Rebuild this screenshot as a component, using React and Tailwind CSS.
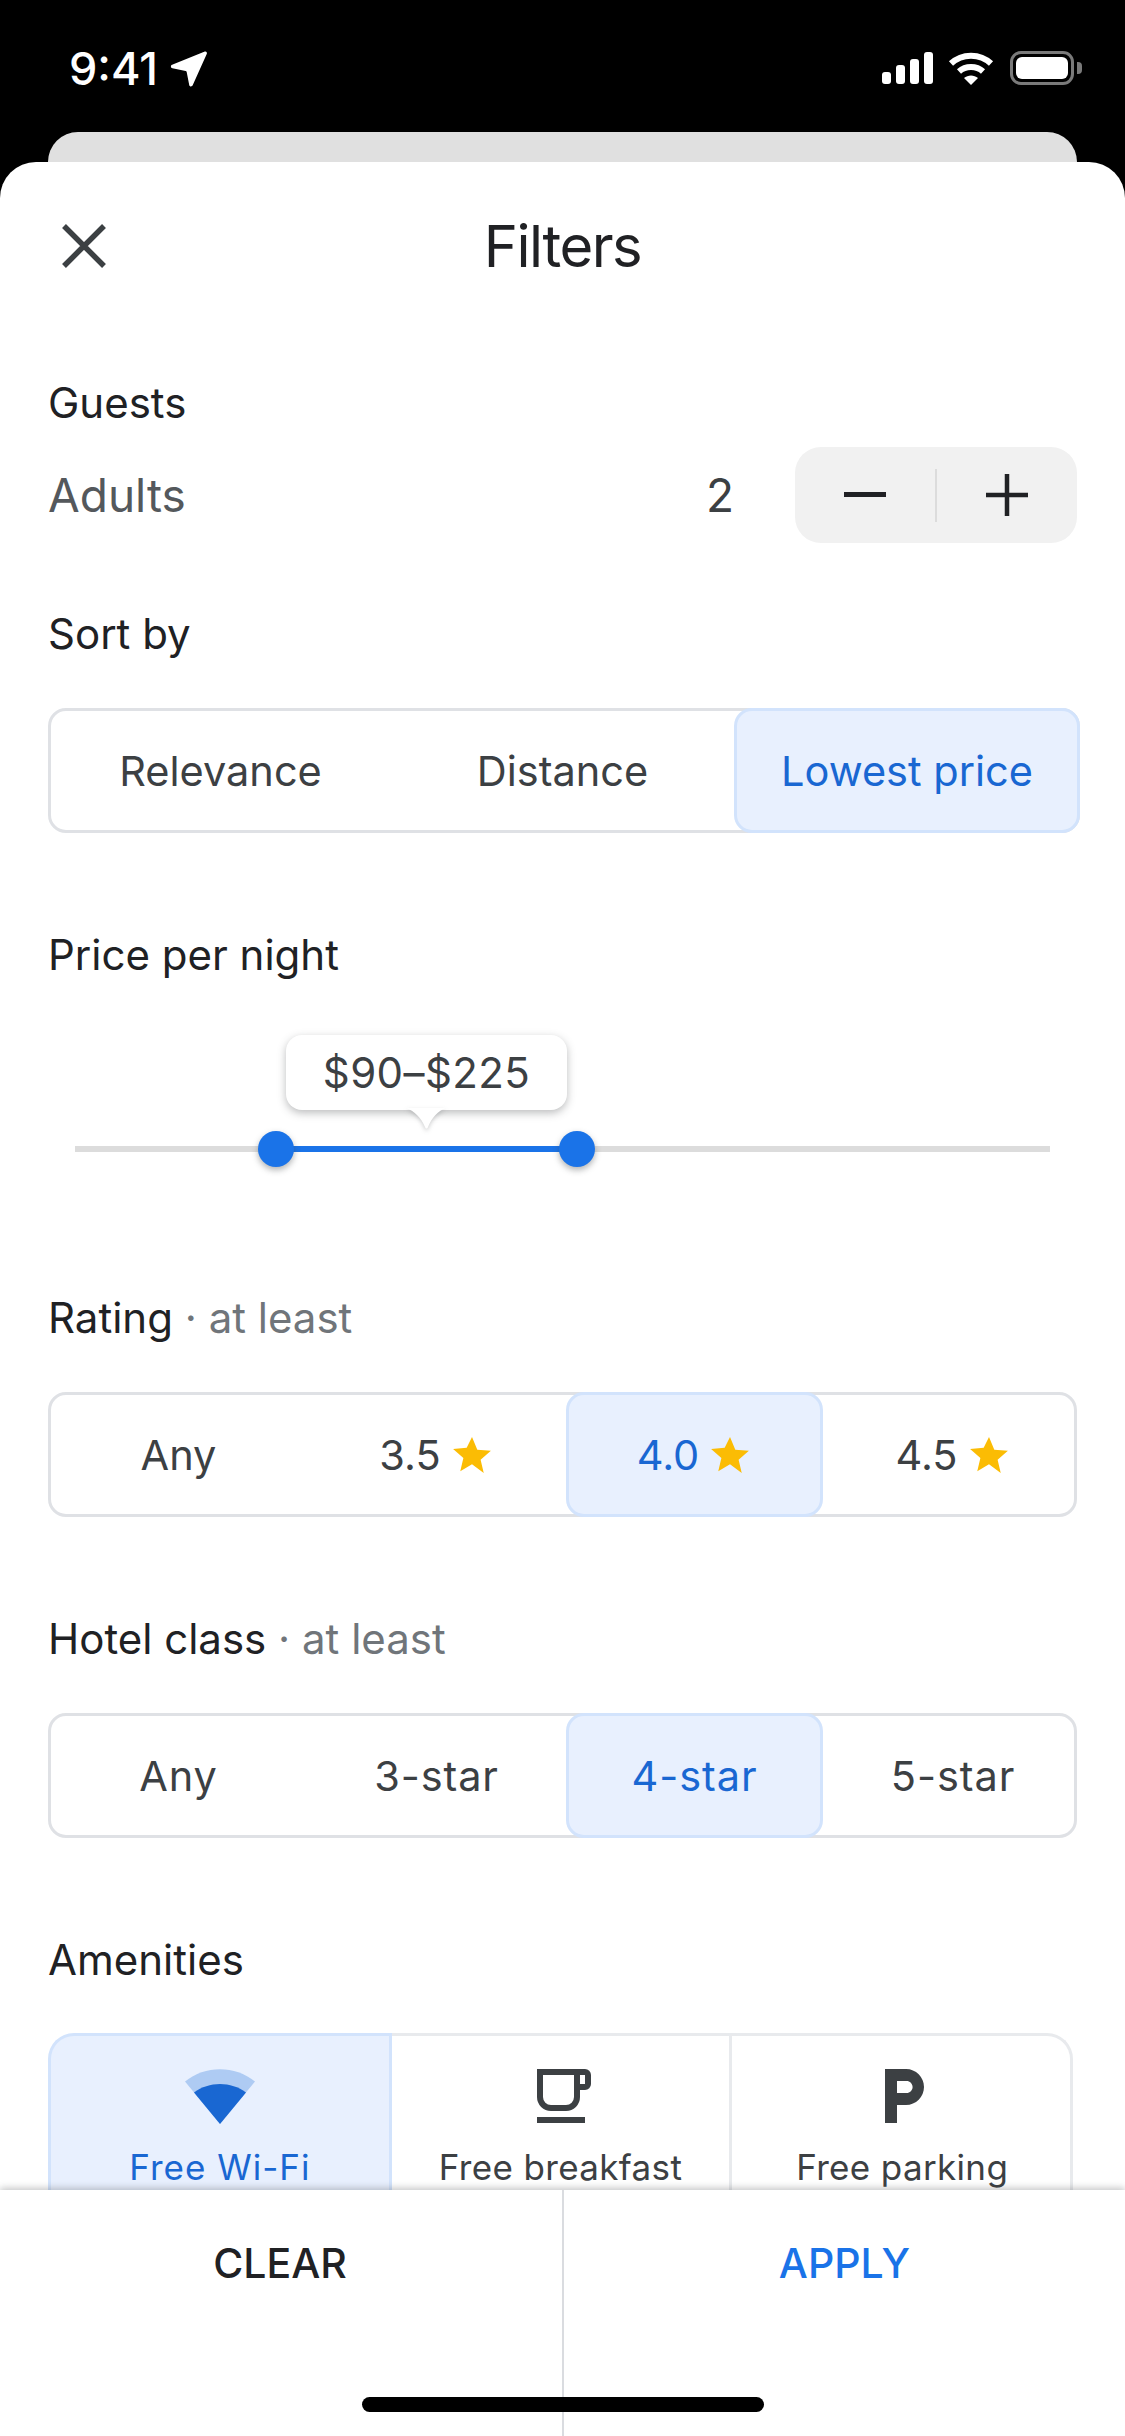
const font = { fontFamily: 'Inter, "Liberation Sans", sans-serif' };

function Heading({ children, hint, className = "" }) {
  return (
    <div className={`h-[56px] leading-[56px] text-[42px] text-[#202124] ${className}`}>
      {children}
      {hint && <span className="text-[#70757a]"> · {hint}</span>}
    </div>
  );
}

function Star() {
  return (
    <svg width="44" height="44" viewBox="0 0 24 24" className="ml-[9px]">
      <path fill="#fbbc04" d="M12 2.2l2.9 6.9 7.4.6-5.6 4.9 1.7 7.2L12 17l-6.4 3.8 1.7-7.2-5.6-4.9 7.4-.6z" />
    </svg>
  );
}

function Segments({ items, active, className = "", lastClass = "" }) {
  return (
    <div className={`mt-[46px] h-[125px] rounded-[18px] border-[3px] border-[#dfe1e5] grid ${className}`}>
      {items.map((it, i) => (
        <div
          key={i}
          className={`-my-[3px] flex items-center justify-center text-[41.5px] font-[440] leading-[58px] rounded-[18px] border-[3px] ${
            i === active
              ? "bg-[#e8f0fe] border-[#d2e3fc] text-[#1967d2]"
              : "border-transparent text-[#3c4043]"
          } ${i === items.length - 1 ? `-mr-[3px] ${lastClass}` : ""} ${i === 0 ? "-ml-[3px] pl-[2px]" : ""}`}
        >
          {it.label}
          {it.star && <Star />}
        </div>
      ))}
    </div>
  );
}

function StatusBar() {
  return (
    <div className="h-[162px] bg-black flex flex-col shrink-0">
      <div className="h-[132px] flex items-start justify-between pl-[69px] pr-[43px] pt-[46px]">
        <div className="flex items-center">
          <span className="text-white text-[45px] leading-[46px] font-medium">9:41</span>
          <svg width="38" height="38" viewBox="0 0 36 36" className="ml-[12px]">
            <path
              fill="#fff"
              d="M33 1.5c1.2-.5 2.4.7 1.9 2L21.5 33.5c-.7 1.6-3 1.4-3.3-.3l-2.4-12.4c-.1-.5-.5-.9-1-1L2.3 17.3c-1.7-.3-2-2.6-.3-3.3z"
            />
          </svg>
        </div>
        <div className="flex items-center mt-[5px]">
          <svg width="51" height="32" viewBox="0 0 51 32">
            <rect x="0" y="20" width="9" height="12" rx="3" fill="#fff" />
            <rect x="14" y="13" width="9" height="19" rx="3" fill="#fff" />
            <rect x="28" y="7" width="9" height="25" rx="3" fill="#fff" />
            <rect x="42" y="0" width="9" height="32" rx="3" fill="#fff" />
          </svg>
          <svg width="46" height="34" viewBox="0 0 46 34" className="ml-[15px]">
            <path d="M3 12.5C14 2 32 2 43 12.5" stroke="#fff" strokeWidth="6" fill="none" />
            <path d="M11 20.5C17.5 14.5 28.5 14.5 35 20.5" stroke="#fff" strokeWidth="6" fill="none" />
            <path d="M16 27c4-3.5 10-3.5 14 0l-7 7z" fill="#fff" />
          </svg>
          <div className="ml-[16px] w-[64px] h-[34px] rounded-[11px] border-[3px] border-[#7a7a7a] p-[3px]">
            <div className="w-full h-full bg-white rounded-[6px]" />
          </div>
          <div className="ml-[3px] w-[5px] h-[12px] bg-[#7a7a7a] rounded-r-[4px]" />
        </div>
      </div>
      <div className="mx-[48px] flex-1 bg-[#e0e0e0] rounded-t-[30px]" />
    </div>
  );
}

function Slider() {
  return (
    <div className="mt-[52px] relative h-[132px]">
      <div className="absolute left-[27px] right-[27px] top-[111px] h-[6px] bg-[#dcdcdc]" />
      <div className="absolute left-[228px] w-[301px] top-[111px] h-[6px] bg-[#1a73e8]" />
      <div className="absolute left-[210px] top-[96px] w-[36px] h-[36px] rounded-full bg-[#1a73e8] shadow-[0_3px_6px_rgba(60,64,67,0.4)]" />
      <div className="absolute left-[511px] top-[96px] w-[36px] h-[36px] rounded-full bg-[#1a73e8] shadow-[0_3px_6px_rgba(60,64,67,0.4)]" />
      <div className="absolute left-[238px] top-0 w-[281px] h-[75px] rounded-[16px] bg-white shadow-[0_3px_9px_rgba(60,64,67,0.35)] flex items-center justify-center text-[42px] font-[440] tracking-[0.4px] text-[#3c4043]">
        $90–$225
      </div>
      <svg width="40" height="22" viewBox="0 0 40 22" className="absolute left-[358px] top-[73px] drop-shadow-[0_2px_2px_rgba(60,64,67,0.25)]">
        <path d="M0 0h40c-8 3-14 9-18 19-.7 2-2.3 2-3 0C15 9 8 3 0 0z" fill="#fff" />
      </svg>
    </div>
  );
}

function Amenity({ icon, label, active, className = "", labelClass = "" }) {
  return (
    <div
      className={`flex-1 h-[190px] border-t-[3px] flex flex-col items-center pt-[33px] ${
        active ? "bg-[#e8f0fe] border-[#d2e3fc] text-[#1967d2]" : "border-[#e8eaed] text-[#3c4043]"
      } ${className}`}
    >
      <div className="h-[54px] flex items-center justify-center">{icon}</div>
      <div className={`mt-[22px] text-[35px] leading-[44px] tracking-[0.35px] ${labelClass}`}>{label}</div>
    </div>
  );
}

export default function App() {
  return (
    <div className="h-[2436px] w-[1125px] bg-black relative overflow-hidden flex flex-col" style={font}>
      <StatusBar />
      <div className="flex-1 min-h-0 bg-white rounded-t-[36px] overflow-hidden">
        <div className="h-[168px] relative flex items-center justify-center">
          <svg width="46" height="46" viewBox="0 0 46 46" className="absolute left-[61px] top-[61px]">
            <path d="M3 3l40 40M43 3L3 43" stroke="#3c4043" strokeWidth="5.5" />
          </svg>
          <span className="text-[58px] tracking-[-1.5px] text-[#202124]">Filters</span>
        </div>
        <div className="px-[48px]">
          <Heading className="mt-[45px]">Guests</Heading>
          <div className="mt-[16px] h-[96px] flex items-center">
            <span className="text-[46px] text-[#54585c]">Adults</span>
            <span className="ml-auto text-[46px] text-[#3c4043] mr-[61px]">2</span>
            <div className="w-[282px] h-[96px] rounded-[26px] bg-[#f1f1f1] flex items-center">
              <div className="flex-1 flex justify-center">
                <svg width="42" height="6" viewBox="0 0 42 6"><rect width="42" height="5" fill="#202124" /></svg>
              </div>
              <div className="w-[2px] h-[53px] bg-[#dcdcdc]" />
              <div className="flex-1 flex justify-center">
                <svg width="42" height="42" viewBox="0 0 42 42">
                  <path d="M0 21h42M21 0v42" stroke="#202124" strokeWidth="4.5" />
                </svg>
              </div>
            </div>
          </div>

          <Heading className="mt-[63px]">Sort by</Heading>
          <Segments
            className="w-[1032px] grid-cols-[340px_343px_1fr]"
            active={2}
            items={[{ label: "Relevance" }, { label: "Distance" }, { label: "Lowest price" }]}
          />

          <Heading className="mt-[94px]">Price per night</Heading>
          <Slider />

          <Heading className="mt-[123px]" hint="at least">Rating</Heading>
          <Segments
            className="grid-cols-[256px_259px_257px_1fr]"
            lastClass="pl-[6px]"
            active={2}
            items={[
              { label: "Any" },
              { label: "3.5", star: true },
              { label: "4.0", star: true },
              { label: "4.5", star: true },
            ]}
          />

          <Heading className="mt-[94px]" hint="at least">Hotel class</Heading>
          <Segments
            className="grid-cols-[256px_259px_257px_1fr] tracking-[0.9px]"
            lastClass="pl-[6px]"
            active={2}
            items={[{ label: "Any" }, { label: "3-star" }, { label: "4-star" }, { label: "5-star" }]}
          />

          <Heading className="mt-[94px]">Amenities</Heading>
          <div className="mt-[45px] flex w-[1025px]">
            <Amenity
              active
              className="rounded-tl-[26px] border-l-[3px] border-r-[3px]"
              labelClass="tracking-[1px]"
              label="Free Wi-Fi"
              icon={
                <svg width="70" height="55" viewBox="0 0 70 55">
                  <path d="M0 12.5C20-4 50-4 70 12.5L35 55z" fill="#aecbf3" />
                  <path d="M9 23.5C24 12 46 12 61 23.5L35 55z" fill="#1967d2" />
                </svg>
              }
            />
            <Amenity
              className="border-r-[3px]"
              label="Free breakfast"
              icon={
                <svg width="54" height="54" viewBox="0 0 54 54" className="translate-x-[3px]">
                  <path d="M3 3H40V28A11 11 0 0 1 29 39H14A11 11 0 0 1 3 28Z" fill="none" stroke="#3c4043" strokeWidth="6" />
                  <path d="M40 3H48A3 3 0 0 1 51 6V15A3 3 0 0 1 48 18H40" fill="none" stroke="#3c4043" strokeWidth="6" />
                  <rect x="0" y="48" width="48" height="6" fill="#3c4043" />
                </svg>
              }
            />
            <Amenity
              className="rounded-tr-[26px] border-r-[3px]"
              labelClass="translate-x-[1px]"
              label="Free parking"
              icon={
                <svg width="39" height="54" viewBox="6 3 13 18" className="translate-x-[3px]">
                  <path
                    fill="#3c4043"
                    d="M13 3H6v18h4v-6h3c3.31 0 6-2.69 6-6s-2.69-6-6-6zm.2 8H10V7h3.2c1.1 0 2 .9 2 2s-.9 2-2 2z"
                  />
                </svg>
              }
            />
          </div>
        </div>
      </div>
      <div className="h-[246px] shrink-0 bg-white flex relative shadow-[0_-2px_7px_rgba(60,64,67,0.3)]">
        <div className="w-[562px] text-center pt-[44px] text-[41px] leading-[58px] font-[450] pr-[2px] text-[#202124]">
          CLEAR
        </div>
        <div className="w-[2px] bg-[#dadce0]" />
        <div className="flex-1 text-center pt-[44px] text-[41px] leading-[58px] font-[450] text-[#1a73e8]">
          APPLY
        </div>
        <div className="absolute left-[362px] top-[207px] w-[402px] h-[15px] bg-black rounded-full" />
      </div>
    </div>
  );
}
